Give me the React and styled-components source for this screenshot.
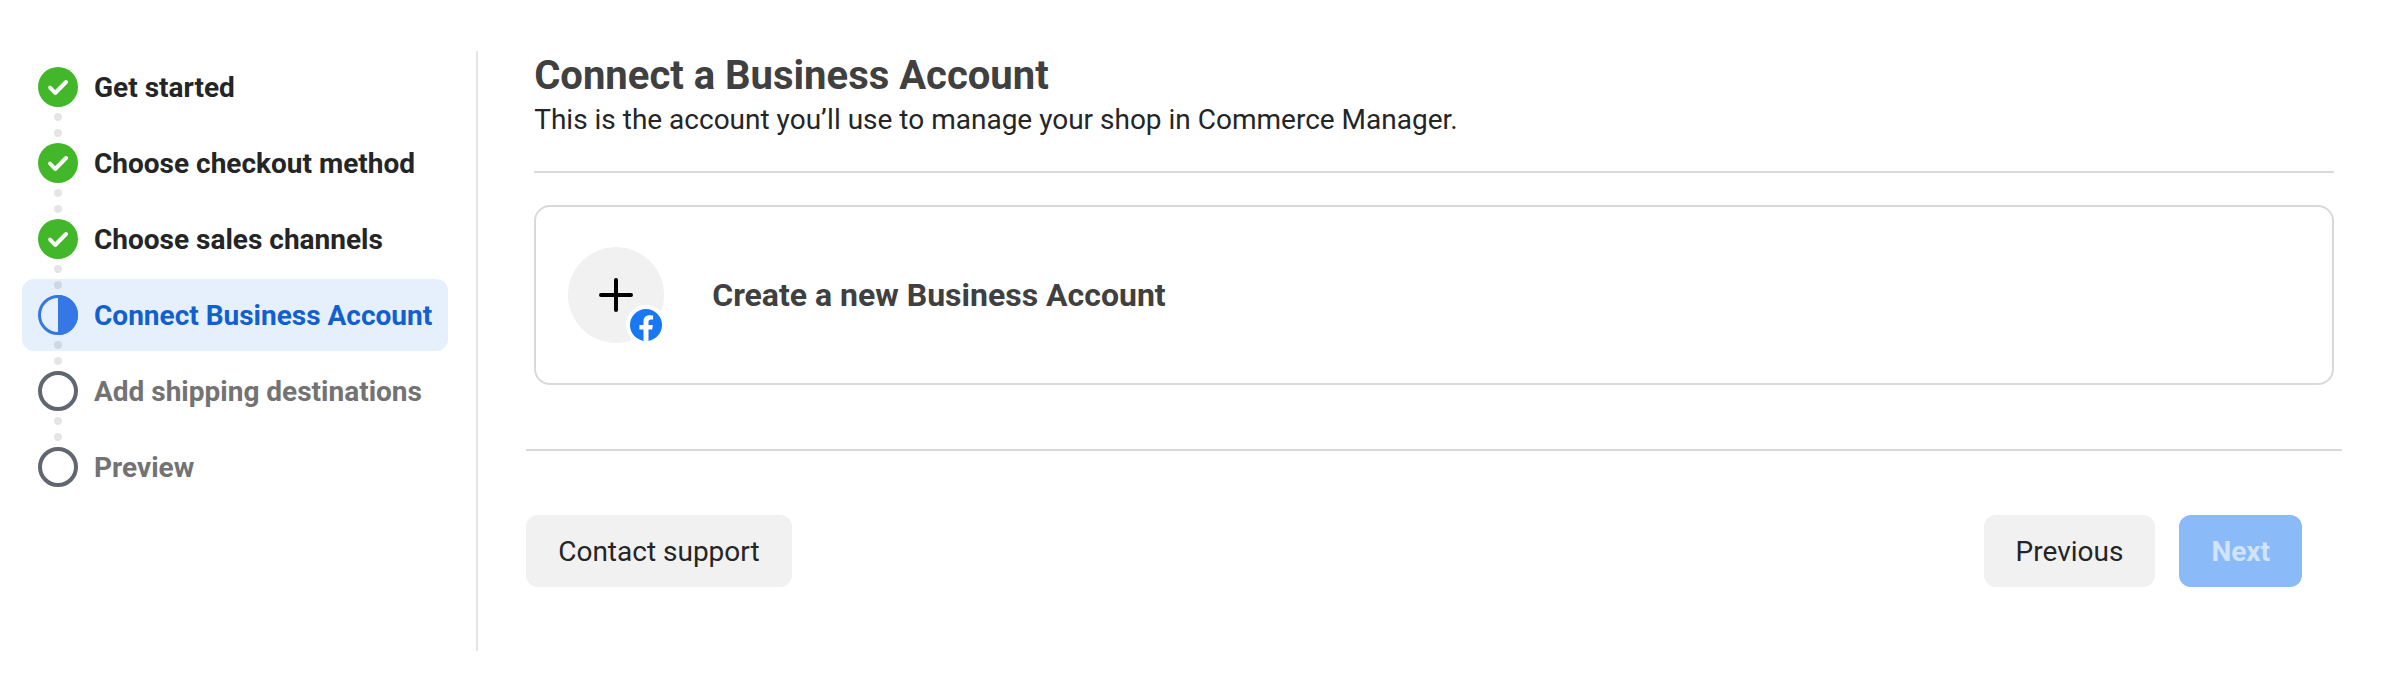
import React from "react";
import styled, { createGlobalStyle } from "styled-components";

const GlobalStyle = createGlobalStyle`
  * {
    box-sizing: border-box;
  }

  body {
    margin: 0;
    background-color: #ffffff;
    color: #242526;
    font-family: Roboto, "Liberation Sans", sans-serif;
    font-size: 28px;
    line-height: 39px;
  }
`;

const Page = styled.div`
  display: flex;
  padding: 51px 42px 41px 22px;
`;

const Sidebar = styled.nav`
  flex: none;
  min-height: 600px;
  padding-right: 28px;
  border-right: 2px solid #e5e5e5;
`;

const StepList = styled.ol`
  display: flex;
  flex-direction: column;
  gap: 4px;
  margin: 0;
  padding: 0;
  list-style: none;
`;

const textColors = {
  done: "#242526",
  current: "#1260cf",
  upcoming: "#737373",
};

const Step = styled.li`
  display: flex;
  align-items: center;
  gap: 16px;
  height: 72px;
  padding: 0 16px;
  border-radius: 12px;
  background-color: ${(props) =>
    props.$status === "current" ? "#e6f0fd" : "transparent"};
  color: ${(props) => textColors[props.$status]};
  font-weight: 700;
  white-space: nowrap;
`;

const Marker = styled.div`
  display: flex;
  flex-direction: column;
  align-items: center;
  gap: 6px;

  svg {
    display: block;
  }
`;

const Dot = styled.span`
  width: 8px;
  height: 8px;
  border-radius: 50%;
  background-color: rgba(0, 0, 0, 0.1);
  visibility: ${(props) => (props.$hidden ? "hidden" : "visible")};
`;

const Main = styled.main`
  flex: 1;
  min-width: 0;
  padding-left: 48px;
`;

const Content = styled.section`
  padding: 0 8px 64px;
  border-bottom: 2px solid #d9d9d9;
`;

const Header = styled.header`
  padding-bottom: 32px;
  border-bottom: 2px solid #d9d9d9;
`;

const Title = styled.h1`
  margin: 0;
  color: #404040;
  font-size: 40px;
  font-weight: 700;
  line-height: 49px;
`;

const Subtitle = styled.p`
  margin: 0;
`;

const AccountCard = styled.button`
  display: flex;
  align-items: center;
  gap: 48px;
  width: 100%;
  margin-top: 32px;
  padding: 40px 32px;
  border: 2px solid #d9d9d9;
  border-radius: 16px;
  background-color: #ffffff;
  color: #404040;
  font-family: inherit;
  font-size: 32px;
  font-weight: 700;
  line-height: 40px;
  text-align: left;
  cursor: pointer;
`;

const AddCircle = styled.span`
  position: relative;
  display: flex;
  align-items: center;
  justify-content: center;
  width: 96px;
  height: 96px;
  border-radius: 50%;
  background-color: #f1f1f1;
`;

const Badge = styled.span`
  position: absolute;
  right: -2px;
  bottom: -2px;
  display: flex;
  border: 4px solid #ffffff;
  border-radius: 50%;
  background-color: #ffffff;
`;

const Footer = styled.footer`
  display: flex;
  justify-content: space-between;
  padding: 64px 40px 0 0;
`;

const ButtonGroup = styled.div`
  display: flex;
  gap: 24px;
`;

const Button = styled.button`
  height: 72px;
  padding: 0 32px;
  border: none;
  border-radius: 12px;
  background-color: #f1f1f1;
  color: #242526;
  font-family: inherit;
  font-size: 28px;
  line-height: 39px;
  cursor: pointer;
`;

const PrimaryButton = styled(Button)`
  background-color: #8bbaf9;
  color: #d1e3fd;
  font-weight: 700;
`;

const steps = [
  { label: "Get started", status: "done" },
  { label: "Choose checkout method", status: "done" },
  { label: "Choose sales channels", status: "done" },
  { label: "Connect Business Account", status: "current" },
  { label: "Add shipping destinations", status: "upcoming" },
  { label: "Preview", status: "upcoming" },
];

const StepIcon = ({ status }) => (
  <svg width="40" height="40" viewBox="0 0 40 40" aria-hidden="true">
    {status === "done" && (
      <>
        <circle cx="20" cy="20" r="20" fill="#42b72a" />
        <path
          d="M12 20.500l5.200 5.500L28 15"
          fill="none"
          stroke="#fff"
          strokeWidth="4"
          strokeLinecap="round"
          strokeLinejoin="round"
        />
      </>
    )}
    {status === "current" && (
      <>
        <circle
          cx="20"
          cy="20"
          r="18.5"
          fill="none"
          stroke="#3578e5"
          strokeWidth="3"
        />
        <path d="M20 0a20 20 0 0 1 0 40z" fill="#3578e5" />
      </>
    )}
    {status === "upcoming" && (
      <circle
        cx="20"
        cy="20"
        r="18"
        fill="none"
        stroke="#606770"
        strokeWidth="4"
      />
    )}
  </svg>
);

const App = () => {
  return (
    <>
      <GlobalStyle />
      <Page>
        <Sidebar aria-label="Setup steps">
          <StepList>
            {steps.map(({ label, status }, index) => (
              <Step
                key={label}
                $status={status}
                aria-current={status === "current" ? "step" : undefined}
              >
                <Marker>
                  <Dot $hidden={index === 0} />
                  <StepIcon status={status} />
                  <Dot $hidden={index === steps.length - 1} />
                </Marker>
                {label}
              </Step>
            ))}
          </StepList>
        </Sidebar>
        <Main>
          <Content>
            <Header>
              <Title>Connect a Business Account</Title>
              <Subtitle>
                This is the account you’ll use to manage your shop in Commerce
                Manager.
              </Subtitle>
            </Header>
            <AccountCard type="button">
              <AddCircle>
                <svg width="34" height="34" viewBox="0 0 34 34">
                  <path
                    d="M17 2v30M2 17h30"
                    stroke="#000"
                    strokeWidth="4"
                    strokeLinecap="round"
                  />
                </svg>
                <Badge>
                  <svg width="32" height="32" viewBox="0 0 32 32">
                    <circle cx="16" cy="16" r="16" fill="#1877f2" />
                    <path
                      d="M22.2 20.6l.7-4.600h-4.400v-3c0-1.300.600-2.500 2.600-2.500h2V6.600s-1.800-.300-3.600-.300c-3.600 0-6 2.200-6 6.200V16H9.400v4.600h4.100v11.200a16 16 0 0 0 5 0V20.600z"
                      fill="#fff"
                    />
                  </svg>
                </Badge>
              </AddCircle>
              Create a new Business Account
            </AccountCard>
          </Content>
          <Footer>
            <Button type="button">Contact support</Button>
            <ButtonGroup>
              <Button type="button">Previous</Button>
              <PrimaryButton type="button" disabled>
                Next
              </PrimaryButton>
            </ButtonGroup>
          </Footer>
        </Main>
      </Page>
    </>
  );
};

export default App;
